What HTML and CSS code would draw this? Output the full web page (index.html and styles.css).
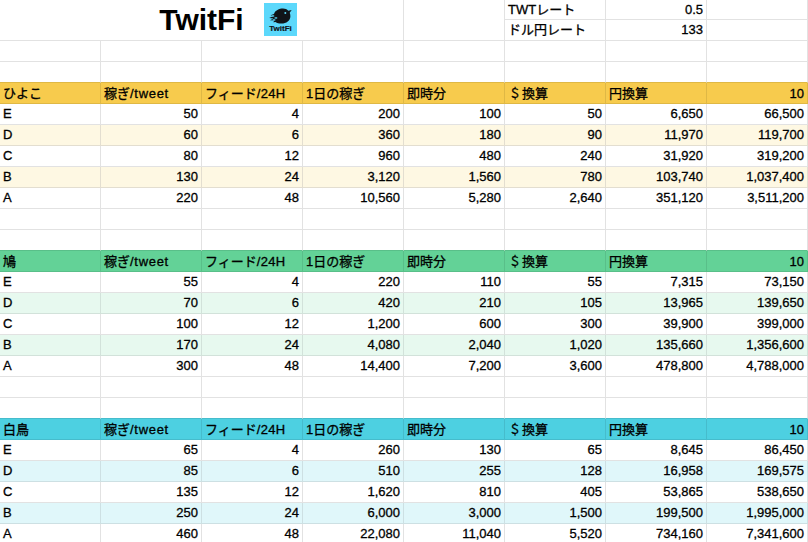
FILE: index.html
```html
<!DOCTYPE html>
<html lang="ja">
<head>
<meta charset="utf-8">
<title>TwitFi</title>
<link rel="stylesheet" href="styles.css">
</head>
<body>
<main class="sheet">
  <div class="top">
    <div class="title">
      <h1 class="title-text">TwitFi</h1>
      <div class="logo">
        <svg class="bird" viewBox="0 0 33 33" aria-hidden="true">
          <g transform="translate(0 1.500)">
            <path d="M10 9.500c1-3.600 5.200-5.500 9-5.500 2.200 0 4 .8 5.300 2.200l3.400-.6-2 2.700c.5 1.100.7 2.200.7 3.400 0 4.500-4 7.300-9 7.300-2.500 0-4.400-.6-5.900-1.600l-2.300.3 1.200-1.800-4.400-.2 3.500-1.800-4.300-.5 4.300-1.800-3-.9z" fill="#101418"/>
            <rect x="7.800" y="10.800" width="2.400" height="1.300" fill="#5cd8fb"/>
            <rect x="10.600" y="12.800" width="2.600" height="1.300" fill="#5cd8fb"/>
            <rect x="8.700" y="14.800" width="2.600" height="1.300" fill="#5cd8fb"/>
            <circle cx="21.300" cy="8.600" r="1" fill="#5cd8fb"/>
          </g>
        </svg>
        <span class="logo-text">TwitFi</span>
      </div>
    </div>
    <div class="cell span-top"></div>
    <div class="cell rate-a">TWTレート</div><div class="cell num rate-a">0.5</div><div class="cell rate-a"></div>
    <div class="cell">ドル円レート</div><div class="cell num">133</div><div class="cell"></div>
  </div>

  <div class="row"><div class="cell"></div><div class="cell"></div><div class="cell"></div><div class="cell"></div><div class="cell"></div><div class="cell"></div><div class="cell"></div><div class="cell"></div></div>
  <div class="row before-gold"><div class="cell"></div><div class="cell"></div><div class="cell"></div><div class="cell"></div><div class="cell"></div><div class="cell"></div><div class="cell"></div><div class="cell"></div></div>

  <section class="table gold">
    <div class="row head"><div class="cell">ひよこ</div><div class="cell">稼ぎ<span class="wide">/tweet</span></div><div class="cell">フィード<span class="wider">/24H</span></div><div class="cell">1日の稼ぎ</div><div class="cell">即時分</div><div class="cell"><span class="dollar">＄</span>換算</div><div class="cell">円換算</div><div class="cell num">10</div></div>
    <div class="row"><div class="cell">E</div><div class="cell num">50</div><div class="cell num">4</div><div class="cell num">200</div><div class="cell num">100</div><div class="cell num">50</div><div class="cell num">6,650</div><div class="cell num">66,500</div></div>
    <div class="row alt"><div class="cell">D</div><div class="cell num">60</div><div class="cell num">6</div><div class="cell num">360</div><div class="cell num">180</div><div class="cell num">90</div><div class="cell num">11,970</div><div class="cell num">119,700</div></div>
    <div class="row"><div class="cell">C</div><div class="cell num">80</div><div class="cell num">12</div><div class="cell num">960</div><div class="cell num">480</div><div class="cell num">240</div><div class="cell num">31,920</div><div class="cell num">319,200</div></div>
    <div class="row alt"><div class="cell">B</div><div class="cell num">130</div><div class="cell num">24</div><div class="cell num">3,120</div><div class="cell num">1,560</div><div class="cell num">780</div><div class="cell num">103,740</div><div class="cell num">1,037,400</div></div>
    <div class="row"><div class="cell">A</div><div class="cell num">220</div><div class="cell num">48</div><div class="cell num">10,560</div><div class="cell num">5,280</div><div class="cell num">2,640</div><div class="cell num">351,120</div><div class="cell num">3,511,200</div></div>
  </section>

  <div class="row"><div class="cell"></div><div class="cell"></div><div class="cell"></div><div class="cell"></div><div class="cell"></div><div class="cell"></div><div class="cell"></div><div class="cell"></div></div>
  <div class="row before-green"><div class="cell"></div><div class="cell"></div><div class="cell"></div><div class="cell"></div><div class="cell"></div><div class="cell"></div><div class="cell"></div><div class="cell"></div></div>

  <section class="table green">
    <div class="row head"><div class="cell">鳩</div><div class="cell">稼ぎ<span class="wide">/tweet</span></div><div class="cell">フィード<span class="wider">/24H</span></div><div class="cell">1日の稼ぎ</div><div class="cell">即時分</div><div class="cell"><span class="dollar">＄</span>換算</div><div class="cell">円換算</div><div class="cell num">10</div></div>
    <div class="row"><div class="cell">E</div><div class="cell num">55</div><div class="cell num">4</div><div class="cell num">220</div><div class="cell num">110</div><div class="cell num">55</div><div class="cell num">7,315</div><div class="cell num">73,150</div></div>
    <div class="row alt"><div class="cell">D</div><div class="cell num">70</div><div class="cell num">6</div><div class="cell num">420</div><div class="cell num">210</div><div class="cell num">105</div><div class="cell num">13,965</div><div class="cell num">139,650</div></div>
    <div class="row"><div class="cell">C</div><div class="cell num">100</div><div class="cell num">12</div><div class="cell num">1,200</div><div class="cell num">600</div><div class="cell num">300</div><div class="cell num">39,900</div><div class="cell num">399,000</div></div>
    <div class="row alt"><div class="cell">B</div><div class="cell num">170</div><div class="cell num">24</div><div class="cell num">4,080</div><div class="cell num">2,040</div><div class="cell num">1,020</div><div class="cell num">135,660</div><div class="cell num">1,356,600</div></div>
    <div class="row"><div class="cell">A</div><div class="cell num">300</div><div class="cell num">48</div><div class="cell num">14,400</div><div class="cell num">7,200</div><div class="cell num">3,600</div><div class="cell num">478,800</div><div class="cell num">4,788,000</div></div>
  </section>

  <div class="row"><div class="cell"></div><div class="cell"></div><div class="cell"></div><div class="cell"></div><div class="cell"></div><div class="cell"></div><div class="cell"></div><div class="cell"></div></div>
  <div class="row before-cyan"><div class="cell"></div><div class="cell"></div><div class="cell"></div><div class="cell"></div><div class="cell"></div><div class="cell"></div><div class="cell"></div><div class="cell"></div></div>

  <section class="table cyan">
    <div class="row head"><div class="cell">白鳥</div><div class="cell">稼ぎ<span class="wide">/tweet</span></div><div class="cell">フィード<span class="wider">/24H</span></div><div class="cell">1日の稼ぎ</div><div class="cell">即時分</div><div class="cell"><span class="dollar">＄</span>換算</div><div class="cell">円換算</div><div class="cell num">10</div></div>
    <div class="row"><div class="cell">E</div><div class="cell num">65</div><div class="cell num">4</div><div class="cell num">260</div><div class="cell num">130</div><div class="cell num">65</div><div class="cell num">8,645</div><div class="cell num">86,450</div></div>
    <div class="row alt"><div class="cell">D</div><div class="cell num">85</div><div class="cell num">6</div><div class="cell num">510</div><div class="cell num">255</div><div class="cell num">128</div><div class="cell num">16,958</div><div class="cell num">169,575</div></div>
    <div class="row"><div class="cell">C</div><div class="cell num">135</div><div class="cell num">12</div><div class="cell num">1,620</div><div class="cell num">810</div><div class="cell num">405</div><div class="cell num">53,865</div><div class="cell num">538,650</div></div>
    <div class="row alt"><div class="cell">B</div><div class="cell num">250</div><div class="cell num">24</div><div class="cell num">6,000</div><div class="cell num">3,000</div><div class="cell num">1,500</div><div class="cell num">199,500</div><div class="cell num">1,995,000</div></div>
    <div class="row"><div class="cell">A</div><div class="cell num">460</div><div class="cell num">48</div><div class="cell num">22,080</div><div class="cell num">11,040</div><div class="cell num">5,520</div><div class="cell num">734,160</div><div class="cell num">7,341,600</div></div>
  </section>
</main>
</body>
</html>
```
FILE: styles.css
```css
* { box-sizing: border-box; }
html, body { margin: 0; height: 100%; overflow: hidden; background: #fff; }
body { font: 13px/20px "Liberation Sans", "Noto Sans CJK JP", sans-serif; color: #000; }
.sheet { width: 808px; }

.row { display: grid; grid-template-columns: repeat(8, 101px); height: 21px; }
.cell {
  height: 21px;
  padding: 0 3px;
  border-right: 1px solid #e2e2e2;
  border-bottom: 1px solid #e2e2e2;
  white-space: nowrap;
  overflow: hidden;
  -webkit-text-stroke: 0.3px #000;
}
.num { text-align: right; }
.head .cell { padding-top: 1px; }
.wide { letter-spacing: 0.7px; }
.wider { letter-spacing: 0.3px; }
.dollar { display: inline-block; width: 14px; font-size: 12px; text-align: center; }

.top {
  display: grid;
  grid-template-columns: 404px repeat(4, 101px);
  grid-template-rows: 20px 21px;
}
.title {
  grid-row: 1 / span 2;
  position: relative;
  display: flex;
  align-items: center;
  justify-content: center;
  border-right: 1px solid #e2e2e2;
  border-bottom: 1px solid #e2e2e2;
}
.title-text { margin: 0; font-size: 30px; line-height: 40px; font-weight: 700; }
.span-top { grid-row: 1 / span 2; height: 41px; }
.top .rate-a { height: 20px; line-height: 19px; }

.logo {
  position: absolute;
  left: 264px;
  top: 3px;
  width: 33px;
  height: 33px;
  background: #5cd8fb;
}
.bird { position: absolute; left: 0; top: 0; width: 33px; height: 33px; }
.logo-text {
  position: absolute;
  left: 0;
  right: 0;
  top: 21px;
  font-size: 8px;
  line-height: 9px;
  font-weight: 700;
  text-align: center;
  color: #101418;
  -webkit-text-stroke: 0.2px #101418;
}

.before-gold .cell { border-bottom-color: #dfb845; }
.before-green .cell { border-bottom-color: #59bf89; }
.before-cyan .cell { border-bottom-color: #46bccc; }

.gold .head { background: #f7cb4d; }
.gold .head .cell { border-color: #dfb845; }
.gold .alt { background: #fef8e3; }
.gold .alt .cell { border-color: #e3ded0; }

.green .head { background: #63d297; }
.green .head .cell { border-color: #59bf89; }
.green .alt { background: #e7f9ef; }
.green .alt .cell { border-color: #d2e2da; }

.cyan .head { background: #4dd0e1; }
.cyan .head .cell { border-color: #46bccc; }
.cyan .alt { background: #e0f7fa; }
.cyan .alt .cell { border-color: #cde0e3; }
```
